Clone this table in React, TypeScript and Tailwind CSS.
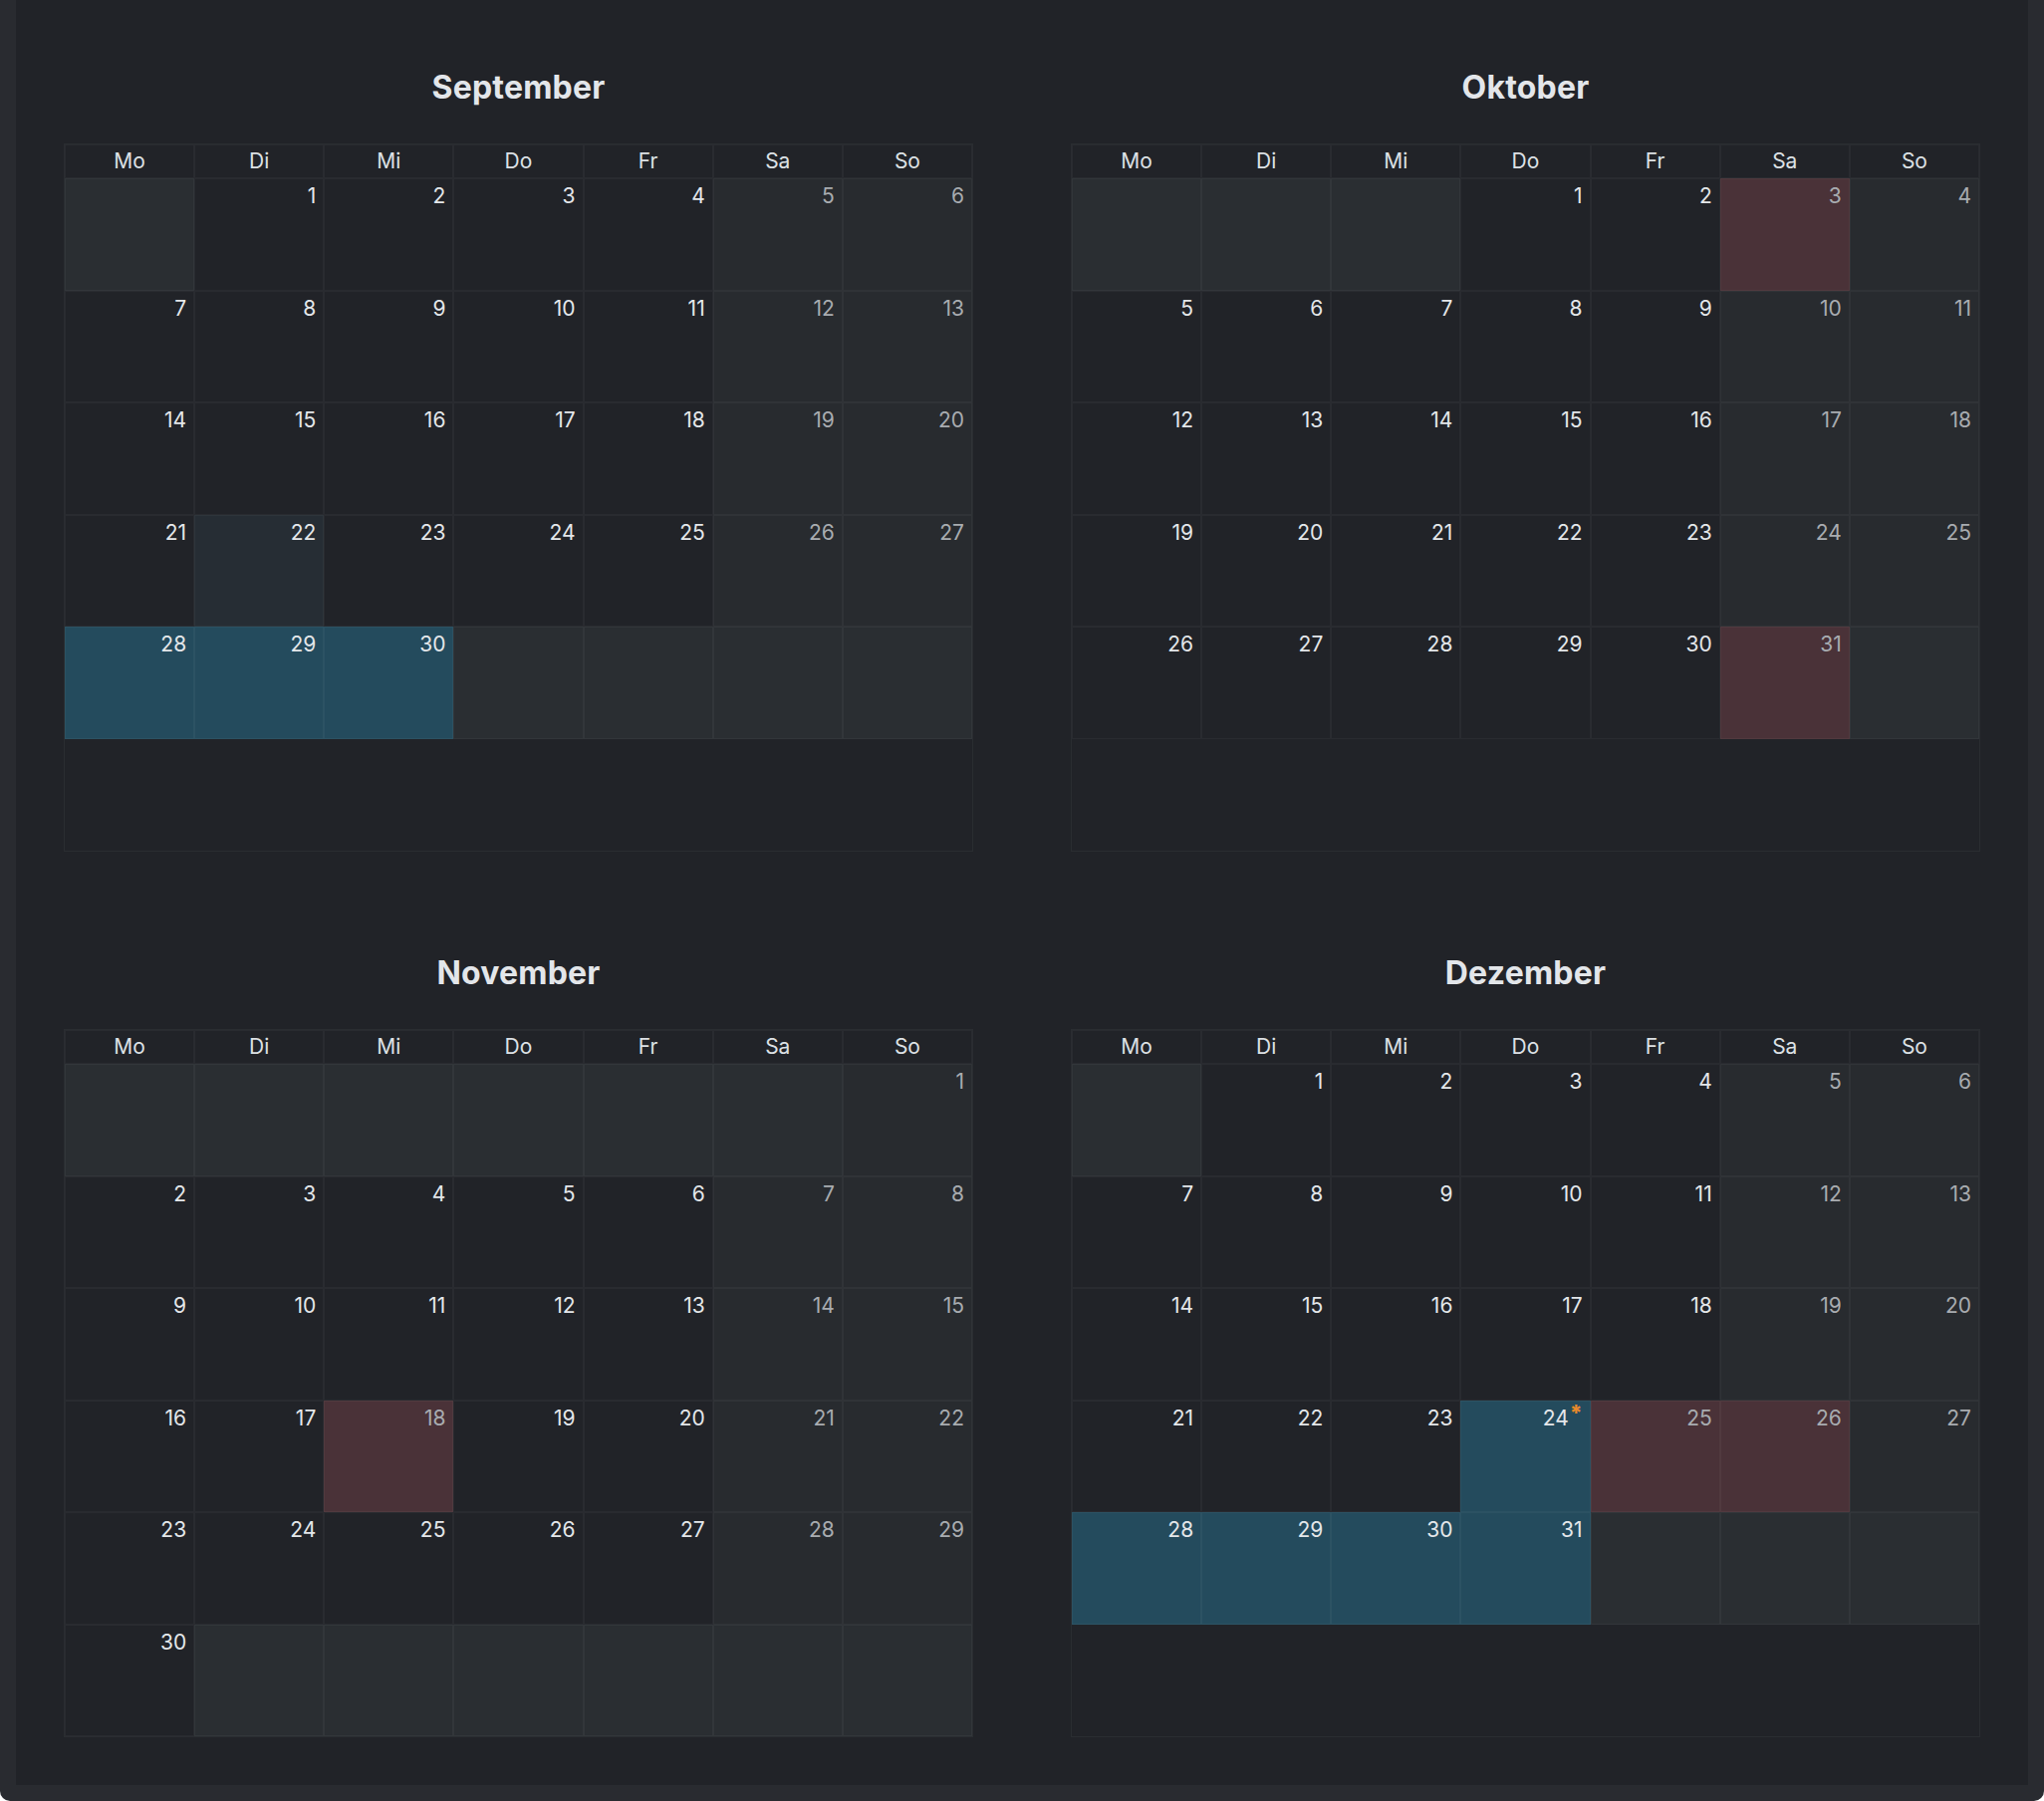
import React from 'react';

type Month = {
  name: string;
  offset: number; // leading blank days, Monday first
  days: number;
  holidays: number[];
  vacation: number[];
  today?: number;
  starred?: number[];
};

const WEEKDAYS = ['Mo', 'Di', 'Mi', 'Do', 'Fr', 'Sa', 'So'];

const MONTHS: Month[] = [
  { name: 'September', offset: 1, days: 30, holidays: [], vacation: [28, 29, 30], today: 22 },
  { name: 'Oktober', offset: 3, days: 31, holidays: [3, 31], vacation: [] },
  { name: 'November', offset: 6, days: 30, holidays: [18], vacation: [] },
  { name: 'Dezember', offset: 1, days: 31, holidays: [25, 26], vacation: [24, 28, 29, 30, 31], starred: [24] },
];

type Cell = { day: number | null; col: number };

const buildWeeks = (m: Month): Cell[][] => {
  const cells: Cell[] = [];
  for (let i = 0; i < m.offset; i++) cells.push({ day: null, col: i });
  for (let d = 1; d <= m.days; d++) cells.push({ day: d, col: (m.offset + d - 1) % 7 });
  while (cells.length % 7 !== 0) cells.push({ day: null, col: cells.length % 7 });
  const weeks: Cell[][] = [];
  for (let i = 0; i < cells.length; i += 7) weeks.push(cells.slice(i, i + 7));
  return weeks;
};

const DayCell: React.FC<{ cell: Cell; month: Month }> = ({ cell, month }) => {
  const { day, col } = cell;
  const weekend = col >= 5;

  // background: out-of-month, vacation, holiday, today, weekend, plain
  let bg = '';
  if (day === null) bg = 'bg-[#2a2e32]';
  else if (month.vacation.includes(day)) bg = 'bg-[#244b5d]';
  else if (month.holidays.includes(day)) bg = 'bg-[#4a3238]';
  else if (month.today === day) bg = 'bg-[#262d34]';
  else if (weekend) bg = 'bg-[#282b2f]';

  const muted = day !== null && (weekend || month.holidays.includes(day)) && !month.vacation.includes(day);

  return (
    <div className={`h-[112.5px] border border-[#ffffff0a] px-[7px] pt-[3px] text-right ${bg}`}>
      {day !== null && (
        <span className={`text-[21px] leading-[28px] ${muted ? 'text-[#a8acb0]' : 'text-[#e4e7ea]'}`}>
          {day}
          {month.starred?.includes(day) && (
            <span className="relative -top-[5px] ml-[1px] text-[22px] leading-none font-extrabold text-[#e8892b]">*</span>
          )}
        </span>
      )}
    </div>
  );
};

const MonthCalendar: React.FC<{ month: Month }> = ({ month }) => {
  const weeks = buildWeeks(month);
  return (
    <div>
      <div className="mb-4 flex h-20 items-center justify-center">
        <h2 className="text-[32px] font-bold tracking-[0.2px] text-[#e3e6ea]">{month.name}</h2>
      </div>
      <div className="h-[711px] border border-[#2a2d31]">
        <div className="grid grid-cols-7">
          {WEEKDAYS.map((w) => (
            <div
              key={w}
              className="flex h-[34px] items-center justify-center border border-[#ffffff0a] text-[21px] text-[#dde1e5]"
            >
              {w}
            </div>
          ))}
        </div>
        {weeks.map((week, i) => (
          <div key={i} className="grid grid-cols-7">
            {week.map((cell, j) => (
              <DayCell key={j} cell={cell} month={month} />
            ))}
          </div>
        ))}
      </div>
    </div>
  );
};

const App: React.FC = () => {
  return (
    <div
      className="min-h-[1808px] rounded-b-[10px] bg-[#292b30] px-4 pb-4"
      style={{ fontFamily: 'Inter, "Noto Sans", sans-serif' }}
    >
      <div className="grid grid-cols-2 gap-x-[98px] gap-y-[82px] bg-[#212328] px-12 pt-[48px] pb-[48px]">
        {MONTHS.map((m) => (
          <MonthCalendar key={m.name} month={m} />
        ))}
      </div>
    </div>
  );
};

export default App;
